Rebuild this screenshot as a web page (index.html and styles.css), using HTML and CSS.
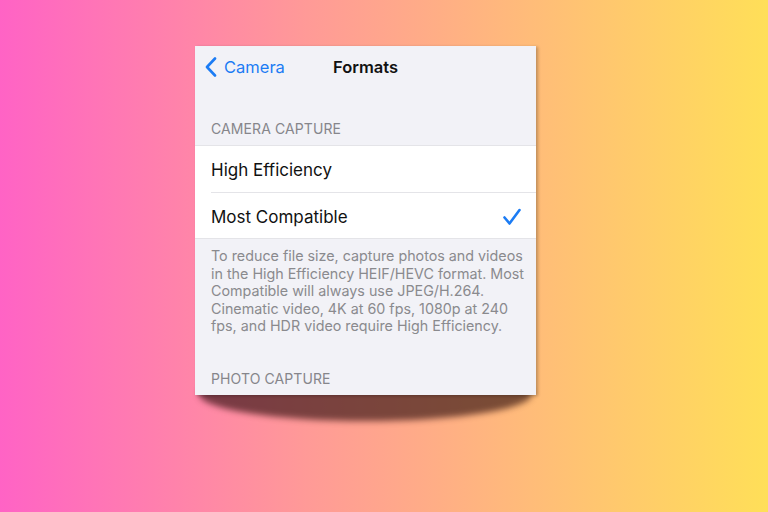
FILE: index.html
```html
<html>
    <head>
        <title>Formats</title>
        <link rel="stylesheet" href="styles.css">
    </head>
    <body>
        <div class="escena">
            <div class="tarjeta">
                <div class="barra">
                    <div class="atras">
                        <svg width="12" height="20" viewBox="0 0 12 20">
                            <path d="M10 1.5 L2 10 L10 18.5" fill="none" stroke="#1c7cf4" stroke-width="2.6" stroke-linecap="round" stroke-linejoin="round"/>
                        </svg>
                        <span>Camera</span>
                    </div>
                    <h1 class="titulo">Formats</h1>
                </div>

                <div class="seccion">CAMERA CAPTURE</div>
                <div class="grupo">
                    <div class="fila">
                        <span>High Efficiency</span>
                    </div>
                    <div class="fila">
                        <span>Most Compatible</span>
                        <svg class="check" width="20" height="18" viewBox="0 0 20 18">
                            <path d="M2.5 9.5 L7.5 15.5 L17.5 2" fill="none" stroke="#1c7cf4" stroke-width="2.6" stroke-linecap="round" stroke-linejoin="round"/>
                        </svg>
                    </div>
                </div>
                <p class="nota">To reduce file size, capture photos and videos in the High Efficiency HEIF/HEVC format. Most Compatible will always use JPEG/H.264. Cinematic video, 4K at 60 fps, 1080p at 240 fps, and HDR video require High Efficiency.</p>

                <div class="seccion seccion-foto">PHOTO CAPTURE</div>
            </div>
        </div>
    </body>
</html>
```

FILE: styles.css
```css
html, body{
    margin: 0;
    height: 512px;
    overflow: hidden;
}
body{
    background: linear-gradient(90deg, #ff63c5 0%, #ff9a97 40%, #ffbd78 70%, #ffdf58 100%);
    font-family: Inter, "Liberation Sans", sans-serif;
}
    .escena{
        padding-top: 46px;
        padding-left: 195px;
    }
    .tarjeta{
        position: relative;
        width: 341px;
        height: 349px;
        background-color: #f2f2f7;
        box-shadow: 2px 1px 3px rgba(0, 0, 0, 0.25);
    }
    /* sombra curva bajo la tarjeta */
    .tarjeta::after{
        content: "";
        position: absolute;
        left: 4px;
        right: 4px;
        bottom: -26px;
        height: 54px;
        border-radius: 50%;
        background: rgba(40, 10, 10, 0.62);
        filter: blur(3px);
        z-index: -1;
    }
    .barra{
        display: flex;
        align-items: center;
        height: 42px;
        position: relative;
    }
    .atras{
        display: flex;
        align-items: center;
        gap: 7px;
        padding-left: 10px;
        color: #1c7cf4;
        font-size: 16.5px;
    }
    .titulo{
        position: absolute;
        left: 0;
        right: 0;
        margin: 0;
        text-align: center;
        font-size: 16.5px;
        font-weight: 600;
        color: #111;
        pointer-events: none;
    }
    .seccion{
        padding: 32px 16px 7px;
        font-size: 14px;
        color: #86868b;
        line-height: 18px;
        letter-spacing: 0.1px;
    }
    .grupo{
        background-color: #fff;
        border-top: 1px solid #e4e4e8;
        border-bottom: 1px solid #e4e4e8;
    }
    .fila{
        box-sizing: border-box;
        display: flex;
        align-items: center;
        justify-content: space-between;
        height: 46px;
        margin-left: 16px;
        padding-top: 2px;
        padding-right: 14px;
        font-size: 17px;
        color: #111;
    }
    .fila + .fila{
        border-top: 1px solid #e4e4e8;
    }
    .nota{
        margin: 0;
        padding: 8px 10px 0 16px;
        font-size: 14.3px;
        line-height: 17.6px;
        color: #8a8a8e;
    }
    .seccion-foto{
        padding-top: 35px;
    }
```
